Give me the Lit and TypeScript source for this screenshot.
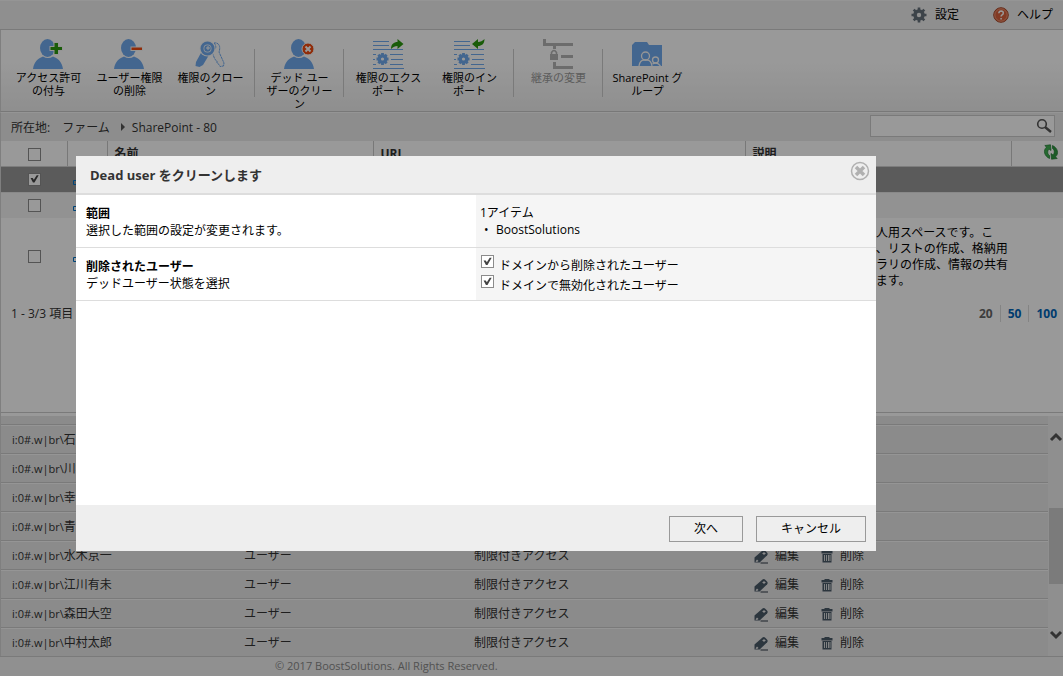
import { LitElement, html, css, svg } from "lit";
import { customElement, state } from "lit/decorators.js";

const BLUE = "#70aaee";

const person = svg`<ellipse cx="14.5" cy="9" rx="7.500" ry="9"/><path d="M0 30c1-8 6-11 10-12.500q5 3 10 0c4 1.500 9 4.500 10 12.500z"/>`;

const report = svg`<g stroke=${BLUE} stroke-width="1.200"><path d="M0 2.500h16M0 6.500h16M0 10.500h30M0 15.500h3M0 20.500h2M0 25.500h3M17 15.500h13M18 20.500h12M17 25.500h13M0 29.500h31"/></g>
  <circle cx="9.500" cy="20" r="3.200" fill="none" stroke=${BLUE} stroke-width="3.200"/>
  <g stroke=${BLUE} stroke-width="2.800"><path d="M9.500 14v3M9.500 23v3M3.500 20h3M12.500 20h3M5.300 15.800l2 2M11.700 22.200l2 2M13.700 15.800l-2 2M7.300 22.200l-2 2"/></g>`;

const icons: Record<string, unknown> = {
  grant: svg`<g fill=${BLUE}>${person}</g><path d="M21.500 4h3.500v4h4v3h-4v4h-3.500v-4h-4v-3h4z" fill="#2c9a10" stroke="#f8f8f8" stroke-width="2" paint-order="stroke"/>`,
  remove: svg`<g fill=${BLUE}>${person}</g><path d="M17.500 8.500h10.500v2.500h-10.500z" fill="#f04a10" stroke="#f8f8f8" stroke-width="2" paint-order="stroke"/>`,
  clone: svg`<path d="M19 4c5-1 7 4 5 9l5 11-.5 3-3.500.5-1-2-2-1.500v-2l-2-1.500-2.500-6 1-3.500c3-1 3-4 .5-7z" fill="#fafafa" stroke=${BLUE} stroke-dasharray="2.500 .5"/>
    <path d="M7 12l7 4-6 10-3.500 2-4-1 .5-4z" fill=${BLUE}/><circle cx="12.500" cy="9.500" r="8" fill="#fafafa"/><circle cx="12.500" cy="9.500" r="5.500" fill="none" stroke=${BLUE} stroke-width="3"/><circle cx="12.500" cy="9.500" r="3.200" fill=${BLUE}/><path d="M13 7v4M11 9h4" stroke="#fff"/>`,
  dead: svg`<g fill=${BLUE}>${person}</g><circle cx="24" cy="10" r="6" fill="#f04a10" stroke="#fafafa" stroke-width="1"/><path d="M21.500 7.500l5 5M26.500 7.500l-5 5" stroke="#fff" stroke-width="2"/>`,
  exportRights: svg`${report}<path d="M18 10c0-5 3-7 6.500-7v-3l6 5-6 5v-3c-2.500 0-4.500 1-6.500 3z" fill="#2c9a10"/>`,
  importRights: svg`${report}<path d="M30.500 0c0 5-3 7-6.500 7v3l-6-5 6-5v3c2.500 0 4.500-1 6.500-3z" fill="#2c9a10"/>`,
  inherit: svg`<g fill="none" stroke="#b4b4b4" stroke-width="3"><path d="M1.500 0v5.500h28.500M11.500 6v4M18 17.500h12M11.500 23v5.500h18.500"/></g><path d="M7 15h8v6h-8z" fill="#b4b4b4"/><path d="M8.500 16v-2.500q2.500-4 5 0v2.500" fill="none" stroke="#b4b4b4" stroke-width="1.500"/>`,
  groups: svg`<path d="M0 6l3-3h12l2 3h13v21h-30z" fill=${BLUE}/><g fill="none" stroke="#fafafa" stroke-width="1.300"><circle cx="13.500" cy="17" r="4"/><path d="M7 27q1-6 5-6h3q4 0 5 6"/><circle cx="23.500" cy="21" r="3"/><path d="M20.500 25q3-2 6 0l2 2"/></g>`,
};

type Tool = { icon: string; lines: string[]; disabled?: boolean };

const toolGroups: Tool[][] = [
  [
    { icon: "grant", lines: ["アクセス許可", "の付与"] },
    { icon: "remove", lines: ["ユーザー権限", "の削除"] },
    { icon: "clone", lines: ["権限のクロー", "ン"] },
  ],
  [{ icon: "dead", lines: ["デッド ユー", "ザーのクリー", "ン"] }],
  [
    { icon: "exportRights", lines: ["権限のエクス", "ポート"] },
    { icon: "importRights", lines: ["権限のイン", "ポート"] },
  ],
  [{ icon: "inherit", lines: ["継承の変更"], disabled: true }],
  [{ icon: "groups", lines: ["SharePoint グ", "ループ"] }],
];

const users = ["石井", "川村", "幸田", "青山", "水木京一", "江川有未", "森田大空", "中村太郎"];

const base = css`
  * { box-sizing: border-box; }
  button, input { font: inherit; color: inherit; margin: 0; }
  button { background: none; border: 0; padding: 0; cursor: pointer; }
  a { color: inherit; text-decoration: none; }
  svg { display: block; flex: none; }
  .check {
    appearance: none; width: 13px; height: 13px; flex: none; display: block;
    border: 1px solid #8c8c8c; background: #fff;
  }
  .check:checked::before {
    content: ""; display: block; width: 11px; height: 11px; background: #444;
    clip-path: polygon(14% 40%, 34% 40%, 44% 56%, 70% 16%, 88% 16%, 50% 82%, 36% 82%);
  }
`;

@customElement("clean-dialog")
export class CleanDialog extends LitElement {
  @state() private removed = true;
  @state() private disabledUsers = true;

  static styles = [base, css`
    :host { display: flex; flex-direction: column; background: #fff; color: #000; }
    .head {
      display: flex; justify-content: space-between; align-items: flex-start;
      height: 39px; padding: 5px 6px 0 14px; background: #eee; border-bottom: 2px solid #ddd;
    }
    h2 { margin: 5px 0 0; font-size: 13px; line-height: 18px; color: #333; }
    .row {
      display: grid; grid-template-columns: 1fr 1fr; border-bottom: 1px solid #ddd; line-height: 17px;
    }
    .about { padding: 10px 10px 8px; }
    h3 { margin: 0; font-size: 12px; line-height: 17px; }
    p { margin: 0; }
    .value { padding: 9px 4px; background: #f5f5f5; }
    .options { padding: 6px 5px; }
    ul { margin: 0; padding-left: 16px; list-style: none; }
    li::before { content: "•"; display: inline-block; width: 12px; margin-left: -12px; }
    .option { display: flex; gap: 5px; line-height: 22px; height: 20px; padding-top: 1px; }
    .foot {
      display: flex; justify-content: flex-end; gap: 13px; margin-top: auto;
      padding: 11px 10px 9px; background: #eee;
    }
    .foot button { height: 26px; padding: 0 24px; border: 1px solid #999; line-height: 22px; }
  `];

  render() {
    return html`
      <div class="head">
        <h2 id="title">Dead user をクリーンします</h2>
        <button aria-label="閉じる">
          <svg width="20" height="20" viewBox="0 0 20 20" fill="none" stroke="#b0b0b0">
            <circle cx="10" cy="10" r="8.500" stroke-width="1.500" />
            <path d="M6 6l8 8M14 6l-8 8" stroke-width="3.500" />
          </svg>
        </button>
      </div>
      <div class="row">
        <div class="about"><h3>範囲</h3><p>選択した範囲の設定が変更されます。</p></div>
        <div class="value">1アイテム<ul><li>BoostSolutions</li></ul></div>
      </div>
      <div class="row">
        <div class="about"><h3>削除されたユーザー</h3><p>デッドユーザー状態を選択</p></div>
        <div class="value options">
          <div class="option">
            <input class="check" type="checkbox" id="removed" .checked=${this.removed}
              @change=${() => (this.removed = !this.removed)} />
            <label for="removed">ドメインから削除されたユーザー</label>
          </div>
          <div class="option">
            <input class="check" type="checkbox" id="disabled" .checked=${this.disabledUsers}
              @change=${() => (this.disabledUsers = !this.disabledUsers)} />
            <label for="disabled">ドメインで無効化されたユーザー</label>
          </div>
        </div>
      </div>
      <div class="foot"><button>次へ</button><button>キャンセル</button></div>
    `;
  }
}

@customElement("app-root")
export class AppRoot extends LitElement {
  static styles = [base, css`
    :host {
      display: flex; flex-direction: column; height: 100vh; overflow: hidden; background: #fff;
      font: 12px/16px "Open Sans", "Noto Sans CJK JP", sans-serif; color: #333;
    }
    .top {
      display: flex; justify-content: flex-end; align-items: center; gap: 34px; height: 30px; flex: none;
      padding-right: 10px; background: #eee; border-top: 1px solid #f8f8f8; border-bottom: 1px solid #ccc; color: #000;
    }
    .top a { display: flex; align-items: center; gap: 8px; }
    .tools {
      display: flex; height: 82px; flex: none; padding: 9px 8px 0 7px; color: #000;
      background: linear-gradient(#fff 40%, #eee); border-bottom: 1px solid #c8c8c8; border-left: 1px solid #d4d4d4;
    }
    .group { display: flex; }
    .group + .group::before {
      content: ""; width: 1px; height: 48px; margin: 10px 4px 0 3px; background: #ccc;
    }
    .tool {
      display: flex; flex-direction: column; align-items: center; gap: 2px; width: 81px;
      font-size: 11px; line-height: 13px; white-space: nowrap;
    }
    .tool span { display: block; }
    .tool:disabled { color: #999; }
    .place {
      display: flex; height: 29px; flex: none; padding: 0 8px 0 10px; line-height: 30px;
      background: #ebebeb; border-left: 1px solid #d4d4d4; border-top: 1px solid #f8f8f8;
    }
    .place .arrow { margin: 10px 6px 0 10px; }
    .place .root { margin-left: 12px; }
    .search {
      display: flex; align-items: center; margin: 2px 0 0 auto; width: 185px; height: 22px;
      border: 1px solid #ccc; background: #fff; padding-right: 2px;
    }
    .search input { flex: 1; min-width: 0; height: 20px; border: 0; background: none; outline: 0; }
    .upper { flex: 1; min-height: 0; border-left: 1px solid #d4d4d4; border-bottom: 1px solid #ccc; }
    table { border-collapse: collapse; table-layout: fixed; width: 100%; }
    th, td { padding: 0; text-align: left; font-weight: normal; }
    .sites th {
      height: 25px; border-right: 1px solid #c8c8c8; border-bottom: 1px solid #d0d0d0;
      font-weight: 700; padding: 2px 0 0 7px;
    }
    .sites th:last-child { border-right: 0; }
    .sites td { height: 26px; }
    .sites td .check { margin-left: 27px; }
    .sites th .check { margin-left: 20px; }
    .sites .chosen { background: #989898; border-bottom: 1px solid #e4e4e4; }
    .sites .alt { background: #f3f3f3; }
    .sites .tall td { height: 76px; color: #000; }
    .sites td svg { margin-left: 6px; }
    .sites .desc { padding: 2px 0 0 11px; white-space: nowrap; line-height: 16px; }
    .c1 { width: 66px; } .c2 { width: 40px; } .c3 { width: 266px; } .c4 { width: 372px; } .c5 { width: 266px; }
    .pager { display: flex; justify-content: space-between; padding: 11px 6px 0 10px; line-height: 17px; }
    .sizes { display: flex; font-weight: 700; color: #666; }
    .sizes a { color: #0064b8; border-left: 1px solid #ddd; padding-left: 7px; margin-left: 7px; }
    .lower { display: flex; flex: none; height: 243px; padding-top: 3px; border-left: 1px solid #d4d4d4; }
    .list { flex: 1; background: #e8e8e8; padding-top: 8px; }
    .users td {
      height: 29px; border-top: 1px solid #ccc; box-shadow: inset 0 1px #f8f8f8; padding: 2px 0 0 11px;
    }
    .login { font-size: 11px; }
    .u1 { width: 232px; } .u2 { width: 230px; } .u3 { width: 280px; }
    .acts { display: flex; gap: 22px; }
    .acts button { display: flex; align-items: center; gap: 6px; }
    .acts .del { gap: 7px; }
    .bar { display: flex; flex-direction: column; width: 15px; background: #efefef; padding: 14px 0 14px 1px; }
    .bar .track { flex: 1; padding-top: 64px; }
    .bar .thumb { height: 76px; background: #cdcdcd; }
    .foot {
      height: 20px; flex: none; padding-left: 275px; border-top: 1px solid #ccc; background: #f0f0f0;
      font-size: 11px; line-height: 18px; color: #888;
    }
    .shade { position: fixed; inset: 0; background: rgba(0, 0, 0, 0.4); }
    clean-dialog { position: fixed; left: 76px; top: 156px; width: 800px; height: 395px; }
  `];

  private siteIcon() {
    return html`<svg width="16" height="16" viewBox="0 0 16 16" fill="none" stroke="#0072c6"><path d="M.5 9.500h5v4h-5zM10 9.500h5v4h-5zM5.500 1.500h5v4h-5zM8 6v3"/></svg>`;
  }

  render() {
    return html`
      <header class="top">
        <a href="#settings">
          <svg width="16" height="16" viewBox="0 0 16 16"><circle cx="8" cy="8" r="4" fill="none" stroke="#66727c" stroke-width="3.600"/><g stroke="#66727c" stroke-width="2.600"><path d="M8 .5v3M8 12.500v3M.5 8h3M12.500 8h3M2.700 2.700l2 2M11.300 11.300l2 2M13.300 2.700l-2 2M4.700 11.300l-2 2"/></g></svg>
          設定</a>
        <a href="#help">
          <svg width="16" height="16" viewBox="0 0 16 16"><circle cx="8" cy="8" r="7.300" fill="#d9623c" stroke="#a8482a"/><circle cx="8" cy="8" r="6.200" fill="none" stroke="#f0a080" stroke-width=".8"/><path d="M5.800 6.300q.2-2.300 2.300-2.300 2.200.1 2.200 2 0 1.200-1.200 1.900-1 .6-1 1.600M8.100 11v1.600" fill="none" stroke="#fff" stroke-width="1.500"/></svg>
          ヘルプ</a>
      </header>
      <nav class="tools">
        ${toolGroups.map((g) => html`<div class="group">${g.map((t) => html`
          <button class="tool" ?disabled=${t.disabled}>
            <svg width="31" height="30" viewBox="0 0 31 30">${icons[t.icon]}</svg>
            <span>${t.lines.map((l) => html`<span>${l}</span>`)}</span>
          </button>`)}</div>`)}
      </nav>
      <div class="place">
        <span>所在地:</span><a class="root" href="#farm">ファーム</a>
        <svg class="arrow" width="6" height="8" viewBox="0 0 6 8"><path d="M1 0l4 4-4 4z" fill="#555"/></svg>
        <a href="#sp80">SharePoint - 80</a>
        <div class="search">
          <input type="text" aria-label="検索" />
          <button aria-label="検索する">
            <svg width="16" height="16" viewBox="0 0 16 16" fill="none" stroke="#555"><circle cx="6" cy="6" r="4.300" stroke-width="1.600"/><path d="M9 9l6 5" stroke-width="2.400"/></svg>
          </button>
        </div>
      </div>
      <main class="upper">
        <table class="sites">
          <colgroup><col class="c1"/><col class="c2"/><col class="c3"/><col class="c4"/><col class="c5"/><col/></colgroup>
          <thead><tr>
            <th><input class="check" type="checkbox" aria-label="すべて選択"/></th><th></th>
            <th>名前</th><th>URL</th><th>説明</th>
            <th><button aria-label="更新"><svg width="40" height="16" viewBox="-24 0 40 16"><g id="half"><path d="M6.500 14.500C1 12 0 6 3.500 3.200L1.800 1.500 7.500.8 8 6.500 6 5C4 7 4.500 10.500 6.500 11.500z" fill="#3fb050" stroke="#207830" stroke-width=".7"/></g><path transform="rotate(180 8 8)" d="M6.500 14.500C1 12 0 6 3.500 3.200L1.800 1.500 7.500.8 8 6.500 6 5C4 7 4.500 10.500 6.500 11.500z" fill="#2f9a42" stroke="#207830" stroke-width=".7"/></svg></button></th>
          </tr></thead>
          <tbody>
            <tr class="chosen"><td><input class="check" type="checkbox" checked aria-label="行 1"/></td><td>${this.siteIcon()}</td><td></td><td></td><td></td><td></td></tr>
            <tr class="alt"><td><input class="check" type="checkbox" aria-label="行 2"/></td><td>${this.siteIcon()}</td><td></td><td></td><td></td><td></td></tr>
            <tr class="tall"><td><input class="check" type="checkbox" aria-label="行 3"/></td><td>${this.siteIcon()}</td><td></td><td></td>
              <td class="desc">ここはあなた専用の個人用スペースです。こ<br/>こではドキュメントや、リストの作成、格納用<br/>するための個別ライブラリの作成、情報の共有<br/>を行うことなどができます。</td><td></td></tr>
          </tbody>
        </table>
        <div class="pager"><span>1 - 3/3 項目</span>
          <div class="sizes"><span>20</span><a href="#50">50</a><a href="#100">100</a></div></div>
      </main>
      <section class="lower">
        <div class="list">
          <table class="users">
            <colgroup><col class="u1"/><col class="u2"/><col class="u3"/><col/></colgroup>
            <tbody>${users.map((u) => html`<tr>
              <td><span class="login">i:0#.w|br\\</span>${u}</td><td>ユーザー</td><td>制限付きアクセス</td>
              <td><div class="acts">
                <button><svg width="15" height="15" viewBox="0 0 15 15"><path d="M8.500 1.500q1.500-1 3 .5l1.500 1.500q1.300 1.500.2 2.700l-7.500 7.300h-5.200v-5z" fill="#4a5a68"/><path d="M10 3v3M8.500 4.500h3" stroke="#e8e8e8"/><path d="M1.500 12.500l1.500-2 1.500 1.500-1.500 1z" fill="#e8e8e8"/><path d="M6.500 14h7.500" stroke="#2c3844"/></svg>編集</button>
                <button class="del"><svg width="12" height="13" viewBox="0 0 12 13" fill="#4a5a68"><path d="M3.500 0h5v1h3v2.500h-11v-2.500h3zM1.500 4h9v8.500h-9z"/><path d="M3.500 5v6M5.500 5v6M7.500 5v6M9 5v6" stroke="#e8e8e8" stroke-width=".9"/></svg>削除</button>
              </div></td></tr>`)}</tbody>
          </table>
        </div>
        <div class="bar">
          <button aria-label="上へ"><svg width="14" height="14" viewBox="0 0 14 14" fill="none" stroke="#555" stroke-width="3"><path d="M2 10l5-5 5 5"/></svg></button>
          <div class="track"><div class="thumb"></div></div>
          <button aria-label="下へ"><svg width="14" height="14" viewBox="0 0 14 14" fill="none" stroke="#555" stroke-width="3"><path d="M2 4l5 5 5-5"/></svg></button>
        </div>
      </section>
      <footer class="foot">© 2017 BoostSolutions. All Rights Reserved.</footer>
      <div class="shade"></div>
      <clean-dialog role="dialog" aria-modal="true" aria-label="Dead user をクリーンします"></clean-dialog>
    `;
  }
}
